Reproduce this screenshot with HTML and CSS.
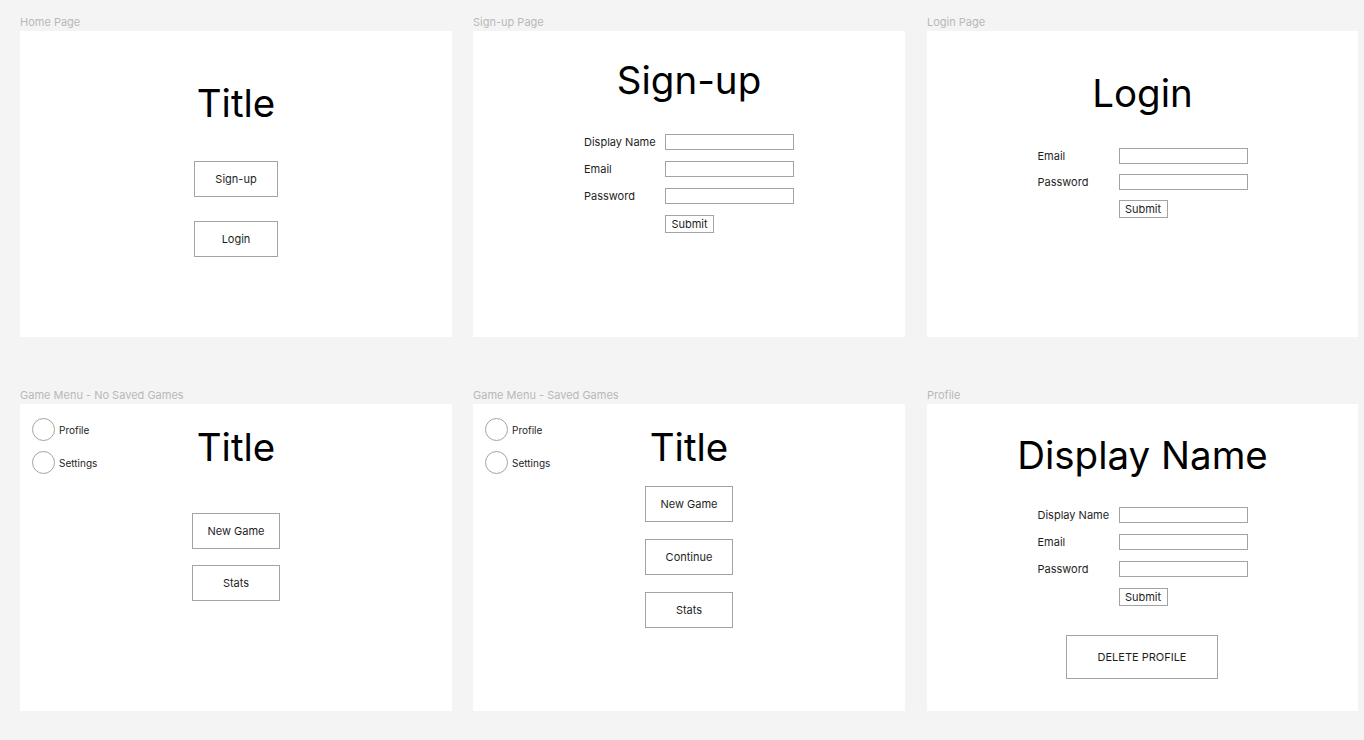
FILE: index.html
```html
<!DOCTYPE html>
<html>
<head>
<meta charset="utf-8">
<link rel="stylesheet" href="styles.css">
</head>
<body>
<div class="board">
  <section class="cell">
    <div class="label">Home Page</div>
    <div class="frame home">
      <h1 class="title">Title</h1>
      <div class="btn-stack home-stack">
        <div class="btn">Sign-up</div>
        <div class="btn">Login</div>
      </div>
    </div>
  </section>

  <section class="cell">
    <div class="label">Sign-up Page</div>
    <div class="frame signup">
      <h1 class="title">Sign-up</h1>
      <div class="form signup-form">
        <span class="f-label">Display Name</span><span class="input"></span>
        <span class="f-label">Email</span><span class="input"></span>
        <span class="f-label">Password</span><span class="input"></span>
        <span></span><span class="submit">Submit</span>
      </div>
    </div>
  </section>

  <section class="cell col3">
    <div class="label">Login Page</div>
    <div class="frame login">
      <h1 class="title">Login</h1>
      <div class="form login-form">
        <span class="f-label">Email</span><span class="input"></span>
        <span class="f-label">Password</span><span class="input"></span>
        <span></span><span class="submit">Submit</span>
      </div>
    </div>
  </section>

  <section class="cell row2">
    <div class="label">Game Menu - No Saved Games</div>
    <div class="frame menu">
      <nav class="side">
        <div class="side-item"><span class="circle"></span>Profile</div>
        <div class="side-item"><span class="circle"></span>Settings</div>
      </nav>
      <div class="menu-main">
        <h1 class="title">Title</h1>
        <div class="btn-stack menu1-stack">
          <div class="btn wide">New Game</div>
          <div class="btn wide">Stats</div>
        </div>
      </div>
    </div>
  </section>

  <section class="cell row2">
    <div class="label">Game Menu - Saved Games</div>
    <div class="frame menu">
      <nav class="side">
        <div class="side-item"><span class="circle"></span>Profile</div>
        <div class="side-item"><span class="circle"></span>Settings</div>
      </nav>
      <div class="menu-main">
        <h1 class="title">Title</h1>
        <div class="btn-stack menu2-stack">
          <div class="btn wide">New Game</div>
          <div class="btn wide">Continue</div>
          <div class="btn wide">Stats</div>
        </div>
      </div>
    </div>
  </section>

  <section class="cell row2 col3">
    <div class="label">Profile</div>
    <div class="frame profile">
      <h1 class="title">Display Name</h1>
      <div class="form profile-form">
        <span class="f-label">Display Name</span><span class="input"></span>
        <span class="f-label">Email</span><span class="input"></span>
        <span class="f-label">Password</span><span class="input"></span>
        <span></span><span class="submit">Submit</span>
      </div>
      <div class="btn danger">DELETE PROFILE</div>
    </div>
  </section>
</div>
</body>
</html>
```

FILE: styles.css
```css
* { box-sizing: border-box; }

html, body {
  margin: 0;
  padding: 0;
  background: #f4f4f4;
  font-family: Inter, "Noto Sans", "Liberation Sans", sans-serif;
  color: #1e1e1e;
}

.board {
  display: grid;
  grid-template-columns: 432px 432px 432px;
  column-gap: 21px;
  row-gap: 51px;
  padding: 15px 0 0 20px;
}

.cell {
  display: flex;
  flex-direction: column;
}

.col3 { margin-left: 1px; }

.label {
  font-size: 11px;
  line-height: 14px;
  height: 14px;
  color: #b8b8b8;
  margin-bottom: 2px;
}

.frame {
  background: #ffffff;
  height: 306px;
  display: flex;
  flex-direction: column;
  align-items: center;
}

.row2 .frame { height: 307px; }

.title {
  margin: 0;
  font-size: 38.5px;
  line-height: 40px;
  font-weight: 400;
  color: #000;
}

.btn-stack {
  display: flex;
  flex-direction: column;
  align-items: center;
}

.btn {
  width: 84px;
  height: 36px;
  border: 1px solid #a3a3a3;
  display: flex;
  align-items: center;
  justify-content: center;
  font-size: 11px;
  color: #1e1e1e;
}

.btn.wide { width: 88px; }

.home { padding-top: 52px; }
.home-stack { margin-top: 38px; gap: 24px; }

.form {
  display: grid;
  grid-template-columns: 81px 129px;
  align-items: center;
  row-gap: 11px;
}

.f-label {
  font-size: 11px;
  color: #1e1e1e;
}

.input {
  display: block;
  height: 16px;
  border: 1px solid #a3a3a3;
  background: #fff;
}

.submit {
  justify-self: start;
  width: 49px;
  height: 18px;
  border: 1px solid #a3a3a3;
  font-size: 11px;
  display: flex;
  align-items: center;
  justify-content: center;
}

.signup { padding-top: 29px; }
.signup-form { margin-top: 34px; }

.login { padding-top: 42px; }
.login-form { margin-top: 35px; row-gap: 10px; }

.menu {
  display: grid;
  grid-template-columns: 1fr auto 1fr;
  align-items: start;
}

.side {
  padding: 14px 0 0 12px;
  display: flex;
  flex-direction: column;
  gap: 10px;
}

.side-item {
  display: flex;
  align-items: center;
  gap: 4px;
  font-size: 10px;
  color: #1e1e1e;
}

.circle {
  width: 23px;
  height: 23px;
  border: 1px solid #a3a3a3;
  border-radius: 50%;
}

.menu-main {
  padding-top: 23px;
  display: flex;
  flex-direction: column;
  align-items: center;
}

.menu1-stack { margin-top: 46px; gap: 16px; }
.menu2-stack { margin-top: 19px; gap: 17px; }

.profile { padding-top: 31px; }
.profile-form { margin-top: 32px; }
.danger {
  margin-top: 29px;
  width: 152px;
  height: 44px;
  font-size: 11px;
  margin-left: -1px;
}
```
